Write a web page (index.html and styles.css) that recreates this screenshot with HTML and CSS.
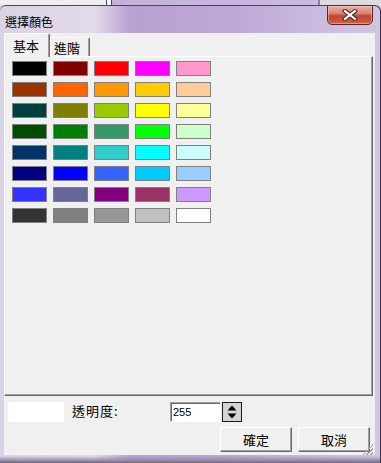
FILE: index.html
```html
<!DOCTYPE html>
<html lang="zh-Hant">
<head>
    <meta charset="UTF-8">
    <title>選擇顏色</title>
    <link rel="stylesheet" href="styles.css">
</head>
<body>
    <!-- strip of the window behind -->
    <div class="desk"></div>

    <div class="window">
        <!-- Title bar -->
        <div class="titlebar">
            <span class="title">選擇顏色</span>
            <button class="close" aria-label="close">
                <svg width="18" height="12" viewBox="0 0 18 12">
                    <path d="M4 2 L14 10 M14 2 L4 10" stroke="#3b2a2a" stroke-width="4.2" stroke-linecap="square"/>
                    <path d="M4 2 L14 10 M14 2 L4 10" stroke="#ffffff" stroke-width="2.2" stroke-linecap="square"/>
                </svg>
            </button>
        </div>

        <div class="client">
            <!-- Tabs -->
            <div class="tabs">
                <div class="tab active">基本</div>
                <div class="tab">進階</div>
            </div>

            <div class="panel">
                <div class="swatches" id="swatches"></div>
            </div>

            <!-- Bottom controls -->
            <div class="footer">
                <div class="alpha-row">
                    <div class="preview"></div>
                    <span class="label">透明度:</span>
                    <div class="spin">
                        <div class="field">255</div>
                        <div class="spin-btn">
                            <svg width="18" height="18" viewBox="0 0 18 18">
                                <path d="M9 2.5 L13.5 7.5 L4.5 7.5 Z" fill="#000"/>
                                <path d="M4.5 10.5 L13.5 10.5 L9 15.5 Z" fill="#000"/>
                            </svg>
                        </div>
                    </div>
                </div>
                <div class="buttons">
                    <button class="btn">確定</button>
                    <button class="btn">取消</button>
                </div>
                <div class="grip"></div>
            </div>
        </div>
    </div>

    <script>
        // basic palette, row by row
        const colors = [
            '#000000', '#800000', '#ff0000', '#ff00ff', '#ff99cc',
            '#993300', '#ff6600', '#ff9900', '#ffcc00', '#ffcc99',
            '#003f3f', '#808000', '#99cc00', '#ffff00', '#ffff99',
            '#004d00', '#008000', '#339966', '#00ff00', '#ccffcc',
            '#003366', '#008080', '#33cccc', '#00ffff', '#ccffff',
            '#000080', '#0000ff', '#3366ff', '#00ccff', '#99ccff',
            '#3333ff', '#666699', '#800080', '#993366', '#cc99ff',
            '#333333', '#808080', '#969696', '#c0c0c0', '#ffffff'
        ];
        const grid = document.getElementById('swatches');
        colors.forEach(c => {
            const sw = document.createElement('div');
            sw.className = 'swatch';
            sw.style.backgroundColor = c;
            grid.appendChild(sw);
        });
    </script>
</body>
</html>
```

FILE: styles.css
```css
/* Basic page */
body {
    margin: 0;
    width: 381px;
    height: 463px;
    overflow: hidden;
    font-family: "Noto Sans CJK TC", "Liberation Sans", sans-serif;
    font-size: 13px;
    color: #000;
    background-color: #d9d4e0;
}

/* window behind the dialog */
.desk {
    height: 5px;
    background: linear-gradient(to right,
        #efedf2 0, #efedf2 106px,
        #4e4b58 106px, #4e4b58 107px,
        #f6f6f8 107px, #f6f6f8 111px,
        #4e4b58 111px, #4e4b58 112px,
        #c3b1da 112px, #c9badf 318px,
        #8a8196 318px, #8a8196 320px,
        #dcdce0 320px);
}

/* Dialog frame */
.window {
    height: 458px;
    display: flex;
    flex-direction: column;
    border-radius: 6px 6px 0 0;
    border-top: 1px solid #4a4257;
    box-sizing: border-box;
    background:
        linear-gradient(to bottom, transparent 0, transparent 450px, #8f86a0 455px, #5d566b 458px),
        linear-gradient(to right, #dcd2e6 0, #e3dae9 95px, #b9a1d1 130px, #bea8d6 230px, #cbbde0 330px, #d0c6e0 381px);
    box-shadow: inset -1px 0 0 #3d3547;
}

.titlebar {
    height: 27px;
    display: flex;
    justify-content: space-between;
    align-items: flex-start;
    flex-shrink: 0;
}

.title {
    font-size: 12px;
    line-height: 16px;
    padding: 8px 0 0 5px;
}

.close {
    width: 46px;
    height: 20px;
    margin: -1px 8px 0 0;
    padding: 0;
    border: 1px solid #5b2620;
    border-radius: 0 0 5px 5px;
    background: linear-gradient(#eab0a4 0%, #dd8574 40%, #c4442e 55%, #cf5f48 100%);
    box-shadow: inset 0 0 0 1px rgba(255, 220, 210, 0.45);
    display: flex;
    align-items: center;
    justify-content: center;
}

/* Client area */
.client {
    flex: 1;
    margin: 0 6px 8px 4px;
    background-color: #f0f0f0;
    display: flex;
    flex-direction: column;
    position: relative;
}

.tabs {
    display: flex;
    align-items: flex-end;
    height: 23px;
    flex-shrink: 0;
}

.tab {
    width: 35px;
    height: 18px;
    padding: 0 0 0 3px;
    line-height: 19px;
    border-top: 1px solid #ffffff;
    border-left: 1px solid #ffffff;
    border-right: 1px solid #696969;
    box-shadow: inset -1px 0 0 #a0a0a0;
    border-radius: 2px 2px 0 0;
}

.tab.active {
    width: 36px;
    height: 23px;
    line-height: 24px;
    padding-left: 8px;
    margin-bottom: -1px;
    position: relative;
    z-index: 1;
    background-color: #f0f0f0;
}

.panel {
    height: 340px;
    box-sizing: border-box;
    margin-right: 2px;
    border-top: 1px solid #ffffff;
    border-left: 1px solid #ffffff;
    border-right: 1px solid #696969;
    border-bottom: 1px solid #696969;
    box-shadow: inset -1px -1px 0 #a0a0a0;
    padding: 4px 0 0 7px;
}

.swatches {
    display: grid;
    grid-template-columns: repeat(5, 35px);
    grid-auto-rows: 15px;
    column-gap: 6px;
    row-gap: 6px;
}

.swatch {
    border: 1px solid #808080;
    box-sizing: border-box;
}

/* Bottom controls */
.footer {
    flex: 1;
    padding: 6px 5px 0 4px;
    display: flex;
    flex-direction: column;
}

.alpha-row {
    display: flex;
    align-items: flex-start;
    height: 20px;
}

.preview {
    width: 56px;
    height: 20px;
    background-color: #ffffff;
}

.label {
    width: 98px;
    margin-left: 8px;
    line-height: 17px;
    letter-spacing: 1px;
}

.spin {
    display: flex;
    gap: 1px;
}

.field {
    width: 51px;
    height: 20px;
    box-sizing: border-box;
    border-top: 1px solid #a0a0a0;
    border-left: 1px solid #a0a0a0;
    border-right: 1px solid #ffffff;
    border-bottom: 1px solid #ffffff;
    box-shadow: inset 1px 1px 0 #696969;
    background-color: #ffffff;
    font-family: "Liberation Sans", Arial, sans-serif;
    font-size: 11px;
    line-height: 19px;
    padding-left: 2px;
}

.spin-btn {
    width: 20px;
    height: 20px;
    box-sizing: border-box;
    border: 1px solid #1a1a1a;
    background-color: #d4d4d4;
    display: flex;
    align-items: center;
    justify-content: center;
}

.buttons {
    display: flex;
    justify-content: flex-end;
    gap: 6px;
    margin-top: 5px;
}

.btn {
    width: 72px;
    height: 25px;
    padding: 0;
    font-family: "Noto Sans CJK TC", sans-serif;
    font-size: 13px;
    color: #000;
    background-color: #f0f0f0;
    border-top: 1px solid #ffffff;
    border-left: 1px solid #ffffff;
    border-right: 1px solid #696969;
    border-bottom: 1px solid #696969;
    box-shadow: inset -1px -1px 0 #a0a0a0;
}

.grip {
    position: absolute;
    right: 2px;
    bottom: 0;
    width: 11px;
    height: 11px;
    background:
        linear-gradient(135deg, transparent 0 50%, #a0a0a0 50% 58%, transparent 58% 68%, #a0a0a0 68% 76%, transparent 76% 86%, #a0a0a0 86% 94%, transparent 94%);
}
```
